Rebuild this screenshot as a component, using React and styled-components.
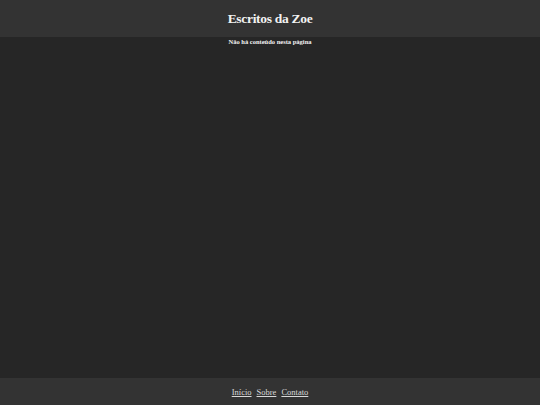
import React from 'react';
import styled, { createGlobalStyle } from 'styled-components';

const GlobalStyle = createGlobalStyle`
  html, body {
    margin: 0;
    padding: 0;
    background: #262626;
  }
  body {
    font-family: "Liberation Serif", "DejaVu Serif", serif;
    color: #f2f2f2;
  }
`;

const Page = styled.div`
  display: flex;
  flex-direction: column;
  min-height: 100vh;
`;

const Header = styled.header`
  height: 37px;
  background: #333333;
  display: flex;
  align-items: center;
  justify-content: center;
`;

const Title = styled.h1`
  margin: 0;
  font-size: 13.5px;
  letter-spacing: -0.3px;
  font-weight: 700;
  color: #f2f2f2;
`;

const Main = styled.main`
  flex: 1;
  display: flex;
  flex-direction: column;
  align-items: center;
`;

const Empty = styled.p`
  margin: 0;
  font-size: 6.5px;
  font-weight: 700;
  line-height: 10px;
  color: #f2f2f2;
`;

const Footer = styled.footer`
  height: 27px;
  background: #333333;
  display: flex;
  align-items: center;
  justify-content: center;
  gap: 5px;
`;

const FooterLink = styled.a`
  font-size: 8.5px;
  color: #d9d9d9;
  text-decoration: underline;
  cursor: pointer;
`;

const App = () => {
  const links = ['Início', 'Sobre', 'Contato'];
  return (
    <>
      <GlobalStyle />
      <Page>
        <Header>
          <Title>Escritos da Zoe</Title>
        </Header>
        <Main>
          <Empty>Não há conteúdo nesta página</Empty>
        </Main>
        <Footer>
          {links.map(l => (
            <FooterLink key={l} href="#">{l}</FooterLink>
          ))}
        </Footer>
      </Page>
    </>
  );
};

export default App;
